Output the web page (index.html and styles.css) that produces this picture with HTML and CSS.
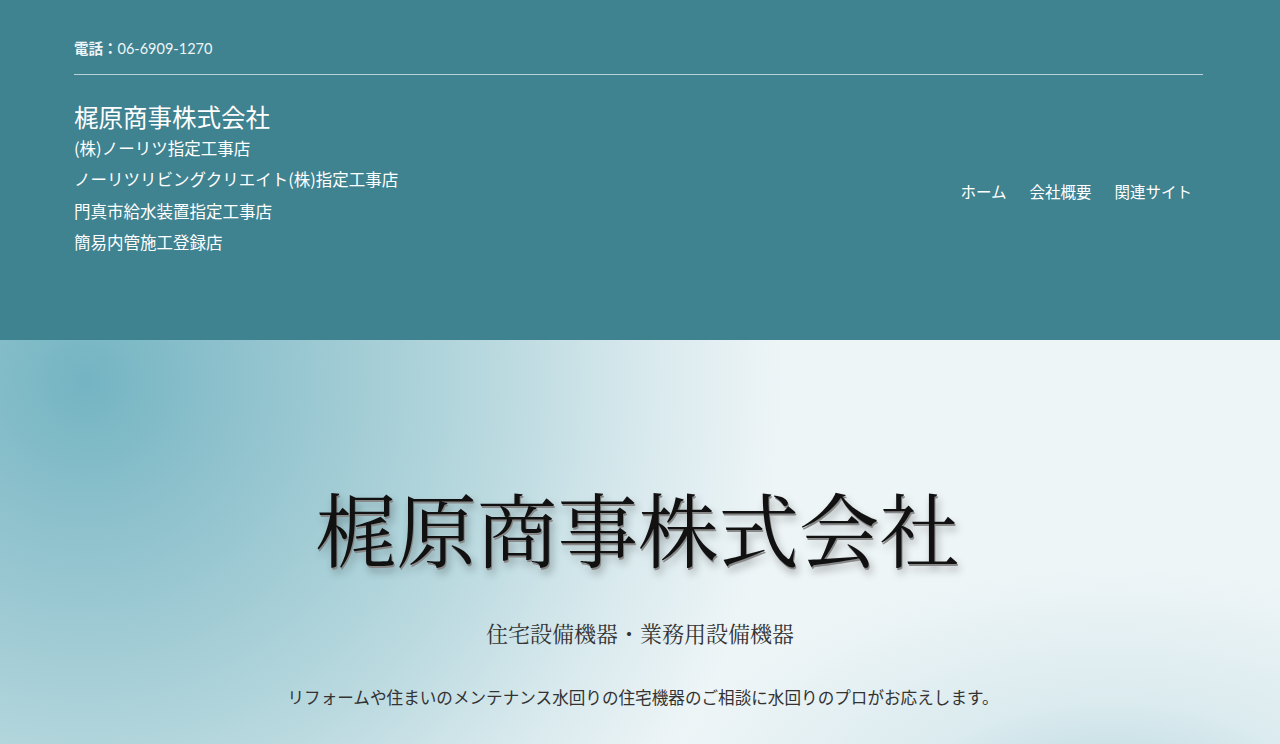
FILE: index.html
```html
<!DOCTYPE html>
<html lang="ja">
<head>
<meta charset="utf-8">
<title>梶原商事株式会社</title>
<link rel="stylesheet" href="styles.css">
</head>
<body>
<header class="site-header">
  <div class="topbar">
    <p class="phone"><span class="phone-label">電話：</span>06-6909-1270</p>
  </div>
  <div class="brand-row">
    <div class="brand">
      <p class="brand-name">梶原商事株式会社</p>
      <ul class="brand-list">
        <li>(株)ノーリツ指定工事店</li>
        <li>ノーリツリビングクリエイト(株)指定工事店</li>
        <li>門真市給水装置指定工事店</li>
        <li>簡易内管施工登録店</li>
      </ul>
    </div>
    <nav class="nav">
      <a href="#">ホーム</a>
      <a href="#">会社概要</a>
      <a href="#">関連サイト</a>
    </nav>
  </div>
</header>
<section class="hero">
  <h1 class="hero-title">梶原商事株式会社</h1>
  <p class="hero-sub">住宅設備機器・業務用設備機器</p>
  <p class="hero-text">リフォームや住まいのメンテナンス水回りの住宅機器のご相談に水回りのプロがお応えします。</p>
</section>
</body>
</html>
```

FILE: styles.css
```css
* { box-sizing: border-box; }
html, body { margin: 0; padding: 0; }
body {
  font-family: "Noto Sans CJK JP", "Noto Sans", sans-serif;
  color: #333;
  overflow: hidden;
}
.site-header {
  background: #3f8290;
  height: 340px;
  padding: 0 77px 0 74px;
  color: #fff;
}
.topbar {
  border-bottom: 1px solid #b9d2d7;
  height: 75px;
  padding-top: 36px;
}
.phone {
  margin: 0;
  font-family: Lato, "Noto Sans CJK JP", sans-serif;
  font-size: 14.5px;
  line-height: 24px;
  color: #eef5f6;
}
.phone-label {
  font-family: "Noto Sans CJK JP", sans-serif;
  font-weight: 700;
}
.brand-row {
  display: flex;
  justify-content: space-between;
  align-items: center;
  padding-top: 26px;
}
.brand-name {
  margin: 0;
  font-size: 24.5px;
  line-height: 32px;
  font-weight: 400;
}
.brand-list {
  list-style: none;
  margin: 0;
  padding: 0;
}
.brand-list li {
  font-size: 16.5px;
  line-height: 31.3px;
}
.nav {
  display: flex;
  gap: 23px;
  padding-right: 11px;
  margin-top: 22px;
}
.nav a {
  color: #fff;
  text-decoration: none;
  font-size: 15.5px;
  font-weight: 400;
}
.hero {
  height: 404px;
  background:
    radial-gradient(ellipse 460px 250px at 1110px 475px, rgba(150,195,206,0.65) 0%, rgba(195,222,228,0.45) 45%, rgba(238,245,247,0) 100%),
    radial-gradient(circle at 85px 40px, #74b4c2 0px, #89bfcb 120px, #a0cbd4 260px, #bbdae0 420px, #d8e9ed 560px, rgba(238,245,247,0) 700px),
    #eef5f7;
  text-align: center;
  padding-top: 136px;
}
.hero-title {
  margin: 0 0 0 -4px;
  font-family: "Noto Serif CJK JP", "Noto Sans CJK JP", serif;
  font-weight: 400;
  font-size: 80.5px;
  line-height: 100px;
  color: #111;
  text-shadow: 1px 2px 0 #888, 3px 6px 8px rgba(0,0,0,0.3);
}
.hero-sub {
  margin: 42px 0 0;
  font-family: "Noto Serif CJK JP", "Noto Sans CJK JP", serif;
  font-size: 22px;
  line-height: 30px;
  color: #333;
}
.hero-text {
  margin: 37px 0 0 6px;
  font-size: 16.6px;
  line-height: 24px;
  color: #333;
}
```
